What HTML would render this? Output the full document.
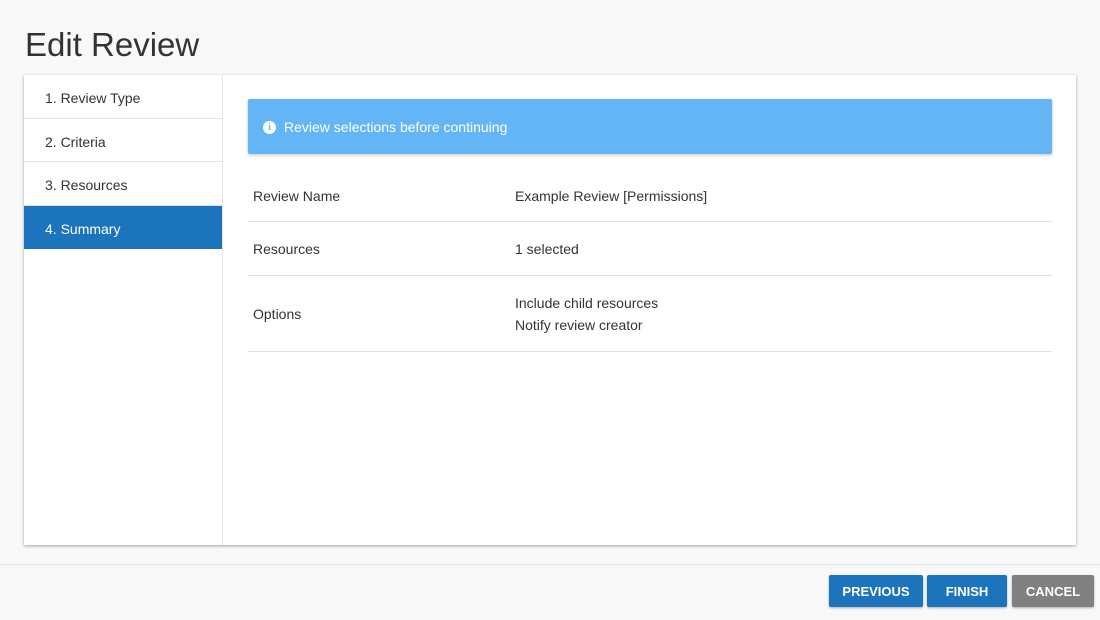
<!DOCTYPE html>
<html><head><style>
*{box-sizing:border-box;margin:0;padding:0}
body{width:1100px;height:620px;background:#f8f8f8;font-family:"Liberation Sans",sans-serif;color:#333;position:relative;overflow:hidden}
h1{position:absolute;left:25px;top:26px;font-size:33px;font-weight:normal;color:#333}
.panel{position:absolute;left:24px;top:75px;width:1052px;height:470px;background:#fff;box-shadow:0 1px 3px rgba(0,0,0,.35)}
.side{position:absolute;left:0;top:0;width:199px;height:470px;border-right:1px solid #e3e3e3}
.it{height:43.5px;border-bottom:1px solid #e3e3e3;padding-left:21px;line-height:46px;font-size:14px;color:#333}
.it.a{background:#1c75bc;color:#fff;border-bottom:none}
.alert{position:absolute;left:224px;top:24px;width:804px;height:55px;background:#64b5f6;color:#fff;font-size:14px;line-height:57px;padding-left:36px;box-shadow:0 1px 3px rgba(0,0,0,.25);border-radius:2px}
.alert i{position:absolute;left:15px;top:22px;width:13px;height:13px;border-radius:50%;background:#fff;color:#64b5f6;font-style:normal;font-weight:bold;font-size:10px;line-height:13px;text-align:center;font-family:"Liberation Serif",serif}
.row{position:absolute;left:224px;width:804px;border-bottom:1px solid #e0e0e0;font-size:14px;color:#333}
.row .k,.row .v{position:absolute;line-height:22px}
.row .k{left:5px}.row .v{left:267px}
.foot{position:absolute;left:0;top:564px;width:1100px;border-top:1px solid #e3e3e3}
.btn{position:absolute;top:575px;height:32px;color:#fff;font-size:13px;font-weight:bold;text-align:center;line-height:33px;border-radius:2px;box-shadow:0 1px 2px rgba(0,0,0,.3)}
</style></head><body>
<h1>Edit Review</h1>
<div class="panel">
<div class="side">
<div class="it">1. Review Type</div>
<div class="it">2. Criteria</div>
<div class="it">3. Resources</div>
<div class="it a">4. Summary</div>
</div>
<div class="alert"><i>i</i>Review selections before continuing</div>
<div class="row" style="top:97px;height:50px"><span class="k" style="top:13px">Review Name</span><span class="v" style="top:13px">Example Review [Permissions]</span></div>
<div class="row" style="top:147px;height:54px"><span class="k" style="top:16px">Resources</span><span class="v" style="top:16px">1 selected</span></div>
<div class="row" style="top:201px;height:76px"><span class="k" style="top:27px">Options</span><span class="v" style="top:16px">Include child resources<br>Notify review creator</span></div>
</div>
<div class="foot"></div>
<div class="btn" style="left:829px;width:94px;background:#1c75bc">PREVIOUS</div>
<div class="btn" style="left:927px;width:80px;background:#1c75bc">FINISH</div>
<div class="btn" style="left:1012px;width:82px;background:#808080">CANCEL</div>
</body></html>
